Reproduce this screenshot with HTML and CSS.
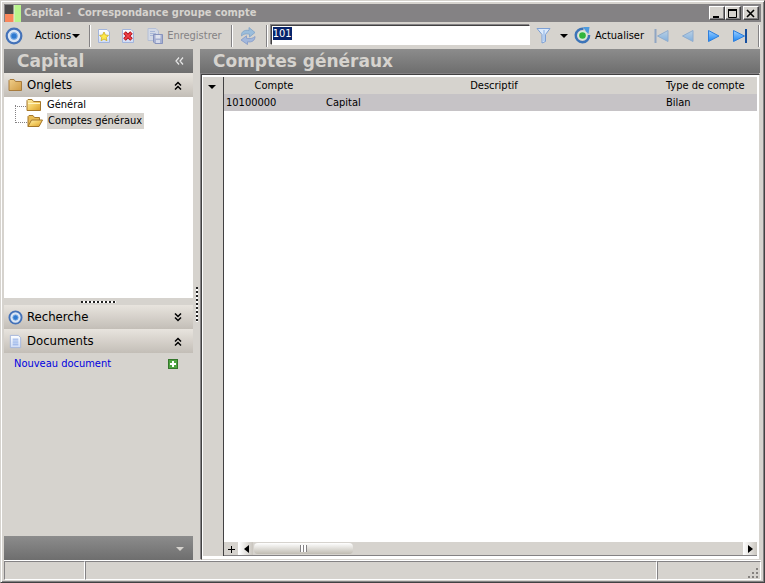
FILE: index.html
```html
<!DOCTYPE html>
<html lang="fr">
<head>
  <meta charset="UTF-8">
  <meta name="viewport" content="width=device-width, initial-scale=1.0">
  <title>Capital - Correspondance groupe compte</title>
  <link rel="stylesheet" href="styles.css">
</head>
<body>
  <!-- Shared gradients and icons -->
  <svg class="defs" width="0" height="0" aria-hidden="true">
    <defs>
      <linearGradient id="gold" x1="0" y1="0" x2="1" y2="1">
        <stop offset="0" stop-color="#fdf0b0"/>
        <stop offset="0.5" stop-color="#f3cc62"/>
        <stop offset="1" stop-color="#d79d28"/>
      </linearGradient>
      <linearGradient id="tan" x1="0" y1="0" x2="1" y2="1">
        <stop offset="0" stop-color="#f0cf8c"/>
        <stop offset="1" stop-color="#cf9a42"/>
      </linearGradient>
      <linearGradient id="sky" x1="0" y1="0" x2="0" y2="1">
        <stop offset="0" stop-color="#9fd0ff"/>
        <stop offset="1" stop-color="#1a86f5"/>
      </linearGradient>
      <linearGradient id="paper" x1="0" y1="0" x2="0" y2="1">
        <stop offset="0" stop-color="#ffffff"/>
        <stop offset="1" stop-color="#cfdcf6"/>
      </linearGradient>
      <symbol id="target" viewBox="0 0 16 16">
        <circle cx="8" cy="8" r="6.500" fill="#dbe6f4" stroke="#4472b8" stroke-width="2"/>
        <circle cx="8" cy="8" r="2.800" fill="#2f7ad0" stroke="#6fa3e0" stroke-width="1"/>
      </symbol>
      <symbol id="folder" viewBox="0 0 16 14">
        <path d="M1 12.500V2.500L2 1.500H6L7.500 3.500H14.500V12.500Z" fill="url(#gold)" stroke="#a5772a"/>
        <path d="M2 5.500H14" stroke="#fff3c0"/>
      </symbol>
      <symbol id="up" viewBox="0 0 8 9">
        <path d="M1 4.500L4 1.500L7 4.500M1 8.500L4 5.500L7 8.500" fill="none" stroke="currentColor" stroke-width="1.500"/>
      </symbol>
      <symbol id="page" viewBox="0 0 14 16">
        <path d="M1.500 1.500H10L12.500 4V14.500H1.500Z" fill="url(#paper)" stroke="#a3b5dc"/>
      </symbol>
    </defs>
  </svg>

  <div class="window">
    <header class="titlebar">
      <svg class="logo" width="17" height="17" viewBox="0 0 17 17">
        <rect width="9" height="9" fill="#4a4848"/>
        <rect y="9" width="9" height="8" fill="#f9865a"/>
        <rect x="9" width="7" height="17" fill="#b9f58c"/>
        <path d="M9 0V17" stroke="#e8f0dc"/>
      </svg>
      <h1>Capital -&nbsp; Correspondance groupe compte</h1>
      <div class="window-buttons">
        <button type="button" class="win-btn" aria-label="Réduire"><svg width="10" height="9" viewBox="0 0 10 9"><path d="M1 8H7" stroke="#000" stroke-width="2"/></svg></button>
        <button type="button" class="win-btn" aria-label="Agrandir"><svg width="10" height="9" viewBox="0 0 10 9"><path d="M0.500 1V8.500H8.500V1" fill="none" stroke="#000"/><path d="M0 1H9" stroke="#000" stroke-width="2"/></svg></button>
        <button type="button" class="win-btn close" aria-label="Fermer"><svg width="10" height="9" viewBox="0 0 10 9"><path d="M1 1L8 8M8 1L1 8" stroke="#000" stroke-width="1.600"/></svg></button>
      </div>
    </header>

    <nav class="toolbar">
      <button type="button" class="tool" aria-label="Cible"><svg width="18" height="18"><use href="#target"/></svg></button>
      <button type="button" class="tool actions">Actions <span class="arrow"></span></button>
      <span class="separator"></span>
      <button type="button" class="tool" aria-label="Nouveau">
        <svg width="14" height="16" viewBox="0 0 14 16"><use href="#page"/><path d="M7 4L8.400 7L11.500 7.400L9.200 9.500L9.900 12.700L7 11L4.100 12.700L4.800 9.500L2.500 7.400L5.600 7Z" fill="#ffe94a" stroke="#cdae20" stroke-width="0.800"/></svg>
      </button>
      <button type="button" class="tool" aria-label="Supprimer">
        <svg width="14" height="16" viewBox="0 0 14 16"><use href="#page"/><path d="M3.500 4.500L10.500 11.500M10.500 4.500L3.500 11.500" stroke="#a90c14" stroke-width="3.600"/><path d="M3.800 4.800L10.200 11.200M10.200 4.800L3.800 11.200" stroke="#f2434a" stroke-width="1.800"/></svg>
      </button>
      <button type="button" class="tool save" disabled>
        <svg width="17" height="17" viewBox="0 0 17 17"><path d="M1 1.500H9L11.500 4V13.500H1Z" fill="#d3d9e6" stroke="#b4bfd6"/><path d="M3 4.500H8M3 6.500H9M3 8.500H8" stroke="#aab9d8"/><path d="M6.500 7.500H15.500V16.500H8L6.500 15Z" fill="#a6b0d2" stroke="#8793bd"/><path d="M8.500 8H13.500V11.500H8.500Z" fill="#dfe3ee"/><path d="M9 13H13V16H9Z" fill="#d5daea"/></svg>
        Enregistrer
      </button>
      <span class="separator"></span>
      <button type="button" class="tool" aria-label="Synchroniser" disabled>
        <svg width="18" height="18" viewBox="0 0 18 18"><path d="M2.500 9C2 5 5 2.500 10 3.500V0.500L16 5.500L10.500 10V7.200C7 6.300 4.500 7 2.500 9Z" fill="#9bbddb" stroke="#7fa2c8" stroke-width="0.800"/><path d="M16 9.500C16 13.500 13 15.500 8.500 14.800V17.500L2 13L7.500 8.800V11.300C11 12 14 11.500 16 9.500Z" fill="#a3b8dc" stroke="#8199c8" stroke-width="0.800"/></svg>
      </button>
      <span class="separator"></span>
      <input type="text" class="search" value="101" aria-label="Recherche de compte">
      <button type="button" class="tool filter" aria-label="Filtrer">
        <svg width="16" height="17" viewBox="0 0 16 17"><path d="M1 1.500H14L9.500 7.500V14.500L6 16V7.500Z" fill="#dceafb" stroke="#7c9fd4"/><path d="M8 3V14" stroke="#b3cdf0" stroke-width="2"/></svg>
      </button>
      <button type="button" class="tool" aria-label="Options du filtre"><span class="arrow"></span></button>
      <button type="button" class="tool refresh">
        <svg width="17" height="17" viewBox="0 0 17 17"><path d="M9.500 1.900A6.700 6.700 0 1 0 15.100 8" fill="none" stroke="#3c74b8" stroke-width="2.400"/><path d="M9 0H15.500L14.500 7L12 4.500Z" fill="#4c9be0"/><circle cx="8.500" cy="8.500" r="4.500" fill="#d8f0dc"/><circle cx="8.500" cy="8.500" r="3.300" fill="#32b53c"/></svg>
        Actualiser
      </button>
      <div class="record-nav">
        <button type="button" class="tool" aria-label="Premier" disabled><svg width="16" height="14" viewBox="0 0 16 14"><path d="M1.500 0V14" stroke="#3d6fb5" stroke-width="2"/><path d="M14 1.500V12.500L3.500 7Z" fill="url(#sky)" stroke="#3b7fd0"/></svg></button>
        <button type="button" class="tool" aria-label="Précédent" disabled><svg width="16" height="14" viewBox="0 0 16 14"><path d="M13 1.500V12.500L2.500 7Z" fill="url(#sky)" stroke="#3b7fd0"/></svg></button>
        <button type="button" class="tool" aria-label="Suivant"><svg width="16" height="14" viewBox="0 0 16 14"><path d="M2.500 1.500V12.500L13 7Z" fill="url(#sky)" stroke="#2f7fdc"/></svg></button>
        <button type="button" class="tool" aria-label="Dernier"><svg width="16" height="14" viewBox="0 0 16 14"><path d="M14 0V14" stroke="#164f9f" stroke-width="2"/><path d="M1.500 1.500V12.500L12.500 7Z" fill="url(#sky)" stroke="#2f7fdc"/></svg></button>
      </div>
      <span class="separator"></span>
    </nav>

    <div class="workspace">
      <aside class="sidebar">
        <div class="banner">
          <h2>Capital</h2>
          <button type="button" class="collapse" aria-label="Replier"><svg width="9" height="8" viewBox="0 0 9 8"><path d="M4 0.500L1 4L4 7.500M8 0.500L5 4L8 7.500" fill="none" stroke="#e8e8e8" stroke-width="1.200"/></svg></button>
        </div>
        <button type="button" class="section">
          <svg width="15" height="14" viewBox="0 0 15 14"><path d="M1 12.500V2.500L2 1.500H6L7.500 3.500H13.500V12.500Z" fill="url(#tan)" stroke="#a87b3c"/></svg>
          <span>Onglets</span>
          <svg class="chevron" width="8" height="9"><use href="#up"/></svg>
        </button>
        <ul class="tree">
          <li><a href="#general"><svg width="16" height="14"><use href="#folder"/></svg><span>Général</span></a></li>
          <li><a href="#comptes" class="selected"><svg width="16" height="14" viewBox="0 0 16 14"><path d="M1 12.500V2.500L2 1.500H6L7.500 3.500H12.500V6" fill="#e9bd55" stroke="#a5772a"/><path d="M1 12.500L4.500 6H15.500L12 12.500Z" fill="url(#gold)" stroke="#a5772a"/></svg><span>Comptes généraux</span></a></li>
        </ul>
        <div class="grip-row"><span class="grip"></span></div>
        <button type="button" class="section">
          <svg width="15" height="15"><use href="#target"/></svg>
          <span>Recherche</span>
          <svg class="chevron down" width="8" height="9"><use href="#up"/></svg>
        </button>
        <button type="button" class="section">
          <svg width="15" height="15" viewBox="0 0 14 16"><use href="#page"/><path d="M4 5.500H10M4 7.500H10M4 9.500H10M4 11.500H10" stroke="#88a8e4"/></svg>
          <span>Documents</span>
          <svg class="chevron" width="8" height="9"><use href="#up"/></svg>
        </button>
        <div class="documents">
          <a href="#nouveau">Nouveau document</a>
          <button type="button" class="tool" aria-label="Ajouter"><svg width="10" height="10" viewBox="0 0 10 10"><rect x="0.500" y="0.500" width="9" height="9" fill="#4da33f" stroke="#35762c"/><path d="M5 2V8M2 5H8" stroke="#fff" stroke-width="2"/></svg></button>
        </div>
        <div class="sidebar-footer"><span class="arrow light"></span></div>
      </aside>

      <div class="splitter"><span class="grip vertical"></span></div>

      <main class="content">
        <div class="banner"><h2>Comptes généraux</h2></div>
        <div class="grid">
          <div class="selector"><button type="button" class="tool" aria-label="Colonnes"><span class="arrow"></span></button></div>
          <div class="grid-body">
            <table>
              <thead>
                <tr><th class="col-account">Compte</th><th>Descriptif</th><th class="col-type">Type de compte</th></tr>
              </thead>
              <tbody>
                <tr><td>10100000</td><td>Capital</td><td>Bilan</td></tr>
              </tbody>
            </table>
            <div class="scrollbar">
              <button type="button" class="add" aria-label="Ajouter une ligne"><svg width="7" height="7" viewBox="0 0 7 7"><path d="M3.500 0V7M0 3.500H7" stroke="#000"/></svg></button>
              <button type="button" class="scroll-btn" aria-label="Défiler à gauche"><svg width="5" height="8" viewBox="0 0 5 8"><path d="M5 0V8L0 4Z"/></svg></button>
              <div class="track"><div class="thumb"></div></div>
              <button type="button" class="scroll-btn" aria-label="Défiler à droite"><svg width="5" height="8" viewBox="0 0 5 8"><path d="M0 0V8L5 4Z"/></svg></button>
            </div>
          </div>
        </div>
      </main>
    </div>

    <footer class="statusbar">
      <div class="status-small"></div>
      <div class="status-main"></div>
      <div class="status-end"><svg width="12" height="12" viewBox="0 0 12 12"><path d="M8 1h2v2h-2zM8 5h2v2h-2zM8 9h2v2h-2zM4 5h2v2h-2zM4 9h2v2h-2zM0 9h2v2h-2z" fill="#85827f"/></svg></div>
    </footer>
  </div>
  <script>
    const search = document.querySelector(".search");
    search.focus();
    search.select();
  </script>
</body>
</html>
```
FILE: styles.css
```css
* {
  box-sizing: border-box;
}
body {
  margin: 0;
  font-family: Tahoma, "DejaVu Sans Condensed", "DejaVu Sans", sans-serif;
  font-size: 11px;
  line-height: 16px;
  color: #000;
  background-color: #d6d3ce;
}
svg {
  display: block;
  flex: none;
}
.defs {
  position: absolute;
}
button {
  font: inherit;
  color: inherit;
  padding: 0;
  margin: 0;
  border: none;
  background: none;
}
h1, h2 {
  margin: 0;
}
.window {
  display: flex;
  flex-direction: column;
  height: 100vh;
  padding: 2px;
  border: 1px solid;
  border-color: #d6d3ce #424142 #424142 #d6d3ce;
  box-shadow: inset 1px 1px #fff, inset -1px -1px #848284;
}

/* Title bar */
.titlebar {
  display: flex;
  align-items: center;
  height: 18px;
  flex: none;
  margin: 1px 1px 0;
  padding: 0 2px 0 1px;
  background-color: #848284;
}
.titlebar h1 {
  flex: 1;
  font-size: 11px;
  font-weight: bold;
  color: #d6d3ce;
  padding-left: 2px;
}
.window-buttons {
  display: flex;
}
.win-btn {
  width: 16px;
  height: 14px;
  display: flex;
  align-items: center;
  justify-content: center;
  background-color: #d6d3ce;
  border: 1px solid;
  border-color: #fff #424142 #424142 #fff;
  box-shadow: inset -1px -1px #848284;
}
.close {
  margin-left: 2px;
}

/* Toolbar */
.toolbar {
  display: flex;
  align-items: center;
  gap: 10px;
  height: 27px;
  flex: none;
  padding: 0 2px;
}
.tool {
  display: flex;
  align-items: center;
  gap: 4px;
}
.actions {
  margin-left: 2px;
  gap: 1px;
}
.save {
  margin-left: 2px;
  gap: 3px;
  color: #848284;
}
.refresh {
  margin-left: -4px;
}
.separator {
  width: 2px;
  height: 22px;
  margin: 0 -4px 0 -1px;
  border-left: 1px solid #848284;
  border-right: 1px solid #fff;
}
.separator:last-child {
  margin: 0;
}
.arrow {
  border: 4px solid transparent;
  border-top-color: #000;
  border-bottom: none;
}
.light {
  border-top-color: #d6d3ce;
}
.search {
  flex: 1;
  min-width: 0;
  height: 20px;
  margin: 0 -4px 2px -3px;
  padding: 0 1px 2px;
  font: inherit;
  border: 1px solid;
  border-color: #424142 #fff #fff #424142;
  box-shadow: -1px -1px #848284;
  outline: none;
  background-color: #fff;
}
.search::selection {
  color: #fff;
  background-color: #08246b;
}
.filter {
  margin-right: -2px;
}
.record-nav {
  display: flex;
  gap: 10px;
}
.record-nav .tool:disabled {
  opacity: 0.45;
}

/* Panels */
.workspace {
  display: flex;
  flex: 1;
  min-height: 0;
  padding: 0 2px 0 1px;
}
.sidebar {
  display: flex;
  flex-direction: column;
  width: 189px;
}
.banner {
  display: flex;
  align-items: center;
  justify-content: space-between;
  height: 24px;
  flex: none;
  padding: 0 9px 0 13px;
  color: #d6d3ce;
  background: linear-gradient(#8c8c8c, #6e6e6e);
}
.banner h2 {
  font-family: Verdana, "DejaVu Sans", sans-serif;
  font-size: 17px;
  line-height: 24px;
  font-weight: bold;
}
.section {
  display: flex;
  align-items: center;
  gap: 4px;
  height: 24px;
  flex: none;
  padding: 0 11px 0 4px;
  font-size: 13px;
  text-align: left;
  background: linear-gradient(#e8e4de, #c3beb7);
}
.section span {
  flex: 1;
}
.down {
  transform: rotate(180deg);
}
.tree {
  flex: none;
  height: 201px;
  margin: 0;
  padding: 0 0 0 11px;
  list-style: none;
  background-color: #fff;
}
.tree li {
  display: flex;
  height: 16px;
}
.tree li::before {
  content: "";
  width: 11px;
  height: 9px;
  border-bottom: 1px dotted #848284;
}
.tree li + li::before {
  height: 17px;
  margin-top: -8px;
  border-left: 1px dotted #848284;
}
.tree a {
  display: flex;
  align-items: center;
  gap: 4px;
  height: 16px;
  color: #000;
  text-decoration: none;
}
.tree span {
  padding: 0 2px 0 1px;
}
.selected span {
  background-color: #d6d3ce;
}
.grip-row {
  display: flex;
  justify-content: center;
  align-items: center;
  height: 7px;
  flex: none;
}
.grip {
  width: 35px;
  height: 2px;
  background: repeating-linear-gradient(90deg, #222 0 2px, #fff 2px 4px);
}
.vertical {
  width: 2px;
  height: 35px;
  background: repeating-linear-gradient(#222 0 2px, #fff 2px 4px);
}
.documents {
  flex: 1;
  display: flex;
  align-items: flex-start;
  justify-content: space-between;
  padding: 3px 15px 0 10px;
}
.documents a {
  color: #0000e0;
  text-decoration: none;
}
.documents .tool {
  height: 16px;
}
.sidebar-footer {
  display: flex;
  align-items: center;
  justify-content: flex-end;
  height: 24px;
  padding: 2px 9px 0 0;
  background: linear-gradient(#8c8c8c, #6e6e6e);
}
.splitter {
  display: flex;
  align-items: center;
  justify-content: center;
  width: 7px;
}
.content {
  display: flex;
  flex-direction: column;
  flex: 1;
  min-width: 0;
}

/* Grid */
.grid {
  display: flex;
  flex: 1;
  margin-left: 1px;
  margin-top: 1px;
  padding: 2px 2px 3px 1px;
  border: 1px solid;
  border-color: #424142 #d6d3ce #d6d3ce #424142;
  background-color: #fff;
  box-shadow: -1px -1px #848284;
}
.selector {
  width: 21px;
  padding: 8px 0 0 5px;
  background-color: #d6d3ce;
  border-right: 1px solid #424142;
}
.grid-body {
  display: flex;
  flex-direction: column;
  justify-content: space-between;
  flex: 1;
}
table {
  width: 100%;
  border-collapse: collapse;
  table-layout: fixed;
}
th, td {
  height: 17px;
  padding: 0 2px;
}
th {
  font-weight: normal;
  background-color: #d6d3ce;
}
td {
  background-color: #c6c3c6;
}
.col-account {
  width: 100px;
}
.col-type {
  width: 93px;
  text-align: left;
}
.scrollbar {
  display: flex;
  height: 14px;
  background-color: #d6d3ce;
  border-bottom: 1px solid #848284;
}
.add, .scroll-btn {
  display: flex;
  align-items: center;
  justify-content: center;
  width: 14px;
  background: linear-gradient(90deg, #fff, #c9c5be);
}
.add {
  width: 15px;
  padding-top: 1px;
  background: #d6d3ce;
  border-right: 1px solid #fff;
}
.track {
  flex: 1;
  padding: 1px 1px;
}
.thumb {
  width: 99px;
  height: 11px;
  border-radius: 4px;
  background:
    repeating-linear-gradient(90deg, #848284 0 1px, #fff 1px 3px) center / 7px 7px no-repeat,
    linear-gradient(#fff, #c0bcb2);
}

/* Status bar */
.statusbar {
  display: flex;
  height: 20px;
  flex: none;
  margin: 0 1px;
  border-top: 1px solid #fff;
}
.statusbar div {
  border: 1px solid;
  border-color: #848284 #fff #fff #848284;
}
.status-small {
  width: 81px;
}
.status-main {
  flex: 1;
}
.status-end {
  display: flex;
  align-items: flex-end;
  justify-content: flex-end;
  width: 104px;
}
```
